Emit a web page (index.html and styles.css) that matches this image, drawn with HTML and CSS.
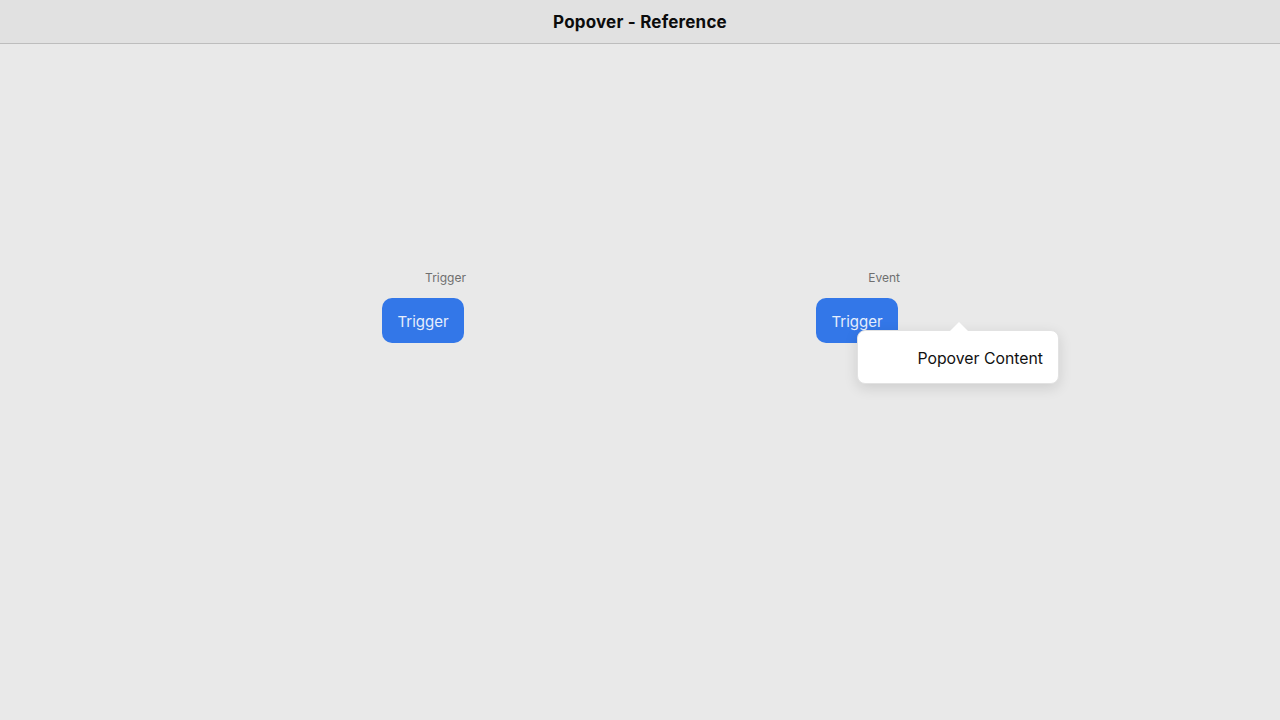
FILE: index.html
```html
<!DOCTYPE html>
<html>
<head>
<meta charset="utf-8">
<title>Popover - Reference</title>
<link rel="stylesheet" href="styles.css">
</head>
<body>
<header class="titlebar">Popover - Reference</header>
<main class="stage">
  <section class="col">
    <div class="item">
      <div class="label">Trigger</div>
      <button class="trigger">Trigger</button>
    </div>
  </section>
  <section class="col">
    <div class="item">
      <div class="label">Event</div>
      <div class="anchor">
        <button class="trigger">Trigger</button>
        <div class="popover">
          <span class="arrow"></span>
          <span class="popover-text">Popover Content</span>
        </div>
      </div>
    </div>
  </section>
</main>
</body>
</html>
```

FILE: styles.css
```css
* { box-sizing: border-box; }
html, body { margin: 0; height: 100%; }
body {
  background: #e9e9e9;
  font-family: Inter, "Noto Sans", sans-serif;
  color: #111;
}
.titlebar {
  height: 44px;
  background: #e1e1e1;
  border-bottom: 1px solid #bdbdbd;
  display: flex;
  align-items: center;
  justify-content: center;
  font-weight: 700;
  font-size: 17px;
  letter-spacing: 0.2px;
  color: #0c0c0c;
}
.stage {
  display: grid;
  grid-template-columns: 434px 434px;
  justify-content: center;
  padding-top: 226px;
}
.col {
  display: flex;
  justify-content: center;
}
.item {
  display: flex;
  flex-direction: column;
  align-items: flex-end;
}
.label {
  font-size: 12px;
  line-height: 16px;
  color: #6f6f6f;
  margin-right: -2px;
  margin-bottom: 12px;
}
.anchor { position: relative; }
.trigger {
  display: block;
  width: 82px;
  height: 45px;
  border: none;
  border-radius: 10px;
  background: #3377e8;
  color: #e6eefc;
  font-family: Inter, "Noto Sans", sans-serif;
  font-size: 15px;
  padding: 2px 0 0;
}
.popover {
  position: absolute;
  left: 41px;
  top: 32px;
  width: 202px;
  height: 54px;
  background: #fff;
  border-radius: 8px;
  border: 1px solid #e2e2e2;
  box-shadow: 0 4px 14px rgba(0,0,0,0.12);
  display: flex;
  align-items: center;
  justify-content: flex-end;
  padding: 2px 15px 0 0;
}
.arrow {
  position: absolute;
  left: 92px;
  top: -9px;
  width: 0;
  height: 0;
  border-left: 9px solid transparent;
  border-right: 9px solid transparent;
  border-bottom: 9px solid #fff;
}
.popover-text {
  font-size: 15.8px;
  color: #111;
}
```
